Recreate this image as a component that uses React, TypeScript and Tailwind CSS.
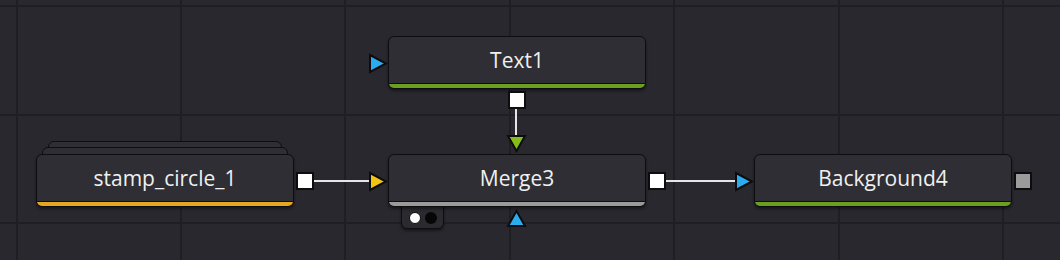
import React from "react";

const font = { fontFamily: '"Open Sans", "Noto Sans", sans-serif' };

function Tri({ dir, color, className }: { dir: "right" | "down" | "up"; color: string; className: string }) {
  const pts =
    dir === "right"
      ? "2,2 18,10.5 2,19"
      : dir === "down"
      ? "2,2 19,2 10.5,17"
      : "2,17 19,17 10.5,2";
  const w = dir === "right" ? 20 : 21;
  const h = dir === "right" ? 21 : 19;
  return (
    <svg className={className} width={w} height={h} viewBox={`0 0 ${w} ${h}`}>
      <polygon points={pts} fill={color} stroke="#0d0d0f" strokeWidth="2" strokeLinejoin="miter" />
    </svg>
  );
}

function Port({ className, fill = "bg-white" }: { className: string; fill?: string }) {
  return (
    <div className={`absolute w-[18px] h-[18px] bg-[#0d0d0f] p-[2px] ${className}`}>
      <div className={`w-full h-full ${fill}`} />
    </div>
  );
}

function Node({ label, bar, className }: { label: string; bar: string; className: string }) {
  return (
    <div
      className={`absolute flex flex-col rounded-[6px] border-[1.5px] border-[#0e0e10] bg-[#2e2e34] overflow-hidden shadow-[0_2px_3px_rgba(0,0,0,0.45)] ${className}`}
    >
      <div className="flex-1 flex items-center justify-center text-[21px] text-[#f0f0f0] pt-[1px]" style={font}>
        {label}
      </div>
      <div className="h-[1.5px] bg-[#0e0e10]" />
      <div className={`h-[4px] ${bar}`} />
    </div>
  );
}

export default function App() {
  const vx = [16, 180, 344, 509, 673, 838, 1002];
  const hy = [5, 114, 222];
  return (
    <div className="relative w-[1060px] h-[260px] bg-[#29282e] overflow-hidden">
      {vx.map((x) => (
        <div key={"v" + x} className="absolute top-0 h-full w-[2px] bg-[#1f1e23]" style={{ left: x }} />
      ))}
      {hy.map((y) => (
        <div key={"h" + y} className="absolute left-0 w-full h-[2px] bg-[#1f1e23]" style={{ top: y }} />
      ))}

      {/* Text1 */}
      <Tri dir="right" color="#2cacee" className="absolute left-[368px] top-[53px]" />
      <Node label="Text1" bar="bg-[#6a9f22]" className="left-[388px] top-[36px] w-[258px] h-[53px]" />
      <Port className="left-[508px] top-[91px]" />
      <div className="absolute left-[515px] top-[109px] w-[2px] h-[27px] bg-[#e6e6e6]" />
      <Tri dir="down" color="#84bd18" className="absolute left-[506px] top-[134px]" />

      {/* stamp_circle_1 stack */}
      <div className="absolute left-[48px] top-[141px] w-[234px] h-[30px] rounded-[6px] border-[1.5px] border-[#0e0e10] bg-[#2e2e34]" />
      <div className="absolute left-[42px] top-[147px] w-[246px] h-[30px] rounded-[6px] border-[1.5px] border-[#0e0e10] bg-[#2e2e34]" />
      <Node label="stamp_circle_1" bar="bg-[#e3a81f]" className="left-[36px] top-[154px] w-[258px] h-[53px]" />
      <Port className="left-[296px] top-[172px]" />
      <div className="absolute left-[314px] top-[180px] w-[56px] h-[2px] bg-[#e6e6e6]" />
      <Tri dir="right" color="#f2c414" className="absolute left-[368px] top-[171px]" />

      {/* Merge3 */}
      <div className="absolute left-[401px] top-[200px] w-[43px] h-[29px] rounded-b-[6px] border-[1.5px] border-[#0e0e10] bg-[#2a2a2f] flex items-end justify-center gap-[4px] pb-[4px] shadow-[0_2px_3px_rgba(0,0,0,0.45)]">
        <div className="w-[12px] h-[12px] rounded-full bg-white border-[1.5px] border-[#0e0e10]" />
        <div className="w-[12px] h-[12px] rounded-full bg-[#060607]" />
      </div>
      <Node label="Merge3" bar="bg-[#9a9a9a]" className="left-[388px] top-[154px] w-[258px] h-[53px]" />
      <Tri dir="up" color="#2cacee" className="absolute left-[506px] top-[209px]" />
      <Port className="left-[648px] top-[172px]" />
      <div className="absolute left-[666px] top-[180px] w-[70px] h-[2px] bg-[#e6e6e6]" />
      <Tri dir="right" color="#2cacee" className="absolute left-[734px] top-[171px]" />

      {/* Background4 */}
      <Node label="Background4" bar="bg-[#6a9f22]" className="left-[754px] top-[154px] w-[258px] h-[53px]" />
      <Port className="left-[1014px] top-[172px]" fill="bg-[#9b9b9b]" />
    </div>
  );
}
